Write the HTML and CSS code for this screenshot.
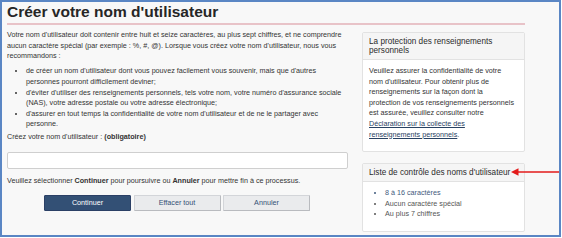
FILE: index.html
```html
<!DOCTYPE html>
<html lang="fr">
<head>
    <meta charset="UTF-8">
    <meta name="viewport" content="width=device-width, initial-scale=1.0">
    <title>Créer votre nom d'utilisateur</title>
    <link rel="stylesheet" href="styles.css">
</head>
<body>
    <div class="frame">
        <div class="container">
            <h1 class="title">Créer votre nom d'utilisateur</h1>
            <div class="row">
                <!-- colonne principale -->
                <div class="main">
                    <p>Votre nom d'utilisateur doit contenir entre huit et seize caractères, au plus sept chiffres, et ne comprendre aucun caractère spécial (par exemple : %, #, @). Lorsque vous créez votre nom d'utilisateur, nous vous recommandons :</p>
                    <ul class="tips">
                        <li>de créer un nom d'utilisateur dont vous pouvez facilement vous souvenir, mais que d'autres personnes pourront difficilement deviner;</li>
                        <li>d'éviter d'utiliser des renseignements personnels, tels votre nom, votre numéro d'assurance sociale (NAS), votre adresse postale ou votre adresse électronique;</li>
                        <li>d'assurer en tout temps la confidentialité de votre nom d'utilisateur et de ne le partager avec personne.</li>
                    </ul>
                    <label class="field-label" for="username">Créez votre nom d'utilisateur : <strong>(obligatoire)</strong></label>
                    <input class="field" type="text" id="username">
                    <p class="hint">Veuillez sélectionner <strong>Continuer</strong> pour poursuivre ou <strong>Annuler</strong> pour mettre fin à ce processus.</p>
                    <div class="actions">
                        <button class="btn btn-primary">Continuer</button>
                        <button class="btn">Effacer tout</button>
                        <button class="btn">Annuler</button>
                    </div>
                </div>
                <!-- colonne de droite -->
                <div class="side">
                    <div class="panel">
                        <div class="panel-heading">La protection des renseignements personnels</div>
                        <div class="panel-body">
                            <p>Veuillez assurer la confidentialité de votre nom d'utilisateur. Pour obtenir plus de renseignements sur la façon dont la protection de vos renseignements personnels est assurée, veuillez consulter notre <a href="#">Déclaration sur la collecte des renseignements personnels</a>.</p>
                        </div>
                    </div>
                    <div class="panel">
                        <div class="panel-heading">Liste de contrôle des noms d'utilisateur</div>
                        <div class="panel-body">
                            <ul class="checklist">
                                <li class="ok">8 à 16 caractères</li>
                                <li>Aucun caractère spécial</li>
                                <li>Au plus 7 chiffres</li>
                            </ul>
                        </div>
                    </div>
                </div>
            </div>
        </div>
        <!-- flèche d'annotation -->
        <svg class="arrow" width="52" height="12" viewBox="0 0 52 12">
            <line x1="6" y1="6" x2="48" y2="6" stroke="#e31b1b" stroke-width="1.6"/>
            <polygon points="0,6 7.5,2.3 7.5,9.7" fill="#e31b1b"/>
        </svg>
    </div>
</body>
</html>
```

FILE: styles.css
```css
*{
    margin: 0;
    padding: 0;
    box-sizing: border-box;
}

body{
    background: #fff;
    font-family: "Liberation Sans", Arial, sans-serif;
    color: #333;
}

.frame{
    position: relative;
    width: 561px;
    height: 237px;
    border: 2px solid #5a86c4;
    background: #f8f8f8;
}

.container{
    width: 518px;
    margin-left: 5px;
}

.title{
    font-size: 15.5px;
    line-height: 18px;
    font-weight: bold;
    color: #262626;
    padding-top: 1px;
    padding-bottom: 2px;
    border-bottom: 2px solid #e8c3c8;
}

.row{
    display: flex;
    gap: 15px;
    margin-top: 5px;
}

.main{
    width: 340px;
    font-size: 7.2px;
    line-height: 10.6px;
}

.tips{
    margin-top: 4.6px;
    padding-left: 19px;
}

.field-label{
    display: block;
    margin-top: 2px;
}

.field{
    display: block;
    width: 341px;
    height: 17px;
    margin-top: 9.7px;
    border: 1px solid #cfcfcf;
    border-radius: 2px;
    background: #fff;
    outline: none;
}

.hint{
    margin-top: 6.7px;
}

.actions{
    display: flex;
    justify-content: center;
    gap: 2.5px;
    margin-top: 8px;
}

.btn{
    width: 87px;
    height: 16px;
    font: 7.2px "Liberation Sans", Arial, sans-serif;
    color: #335075;
    background: #eaebed;
    border: 1px solid #d3d5d9;
    border-right-color: #b9bbbf;
    border-bottom-color: #b9bbbf;
    border-radius: 1px;
}

.btn-primary{
    color: #fff;
    background: #335075;
    border-color: #2b4066;
}

.side{
    width: 163px;
    margin-top: 2px;
    font-size: 7.2px;
    line-height: 10.6px;
}

.panel{
    background: #fff;
    border: 1px solid #e2e2e2;
    border-radius: 2px;
    margin-bottom: 11px;
}

.panel-heading{
    font-size: 8.2px;
    line-height: 9px;
    padding: 4px 6px;
    background: #f5f5f5;
    border-bottom: 1px solid #e2e2e2;
    color: #2b2b2b;
}

.panel-body{
    padding: 6px 8.5px 6px 6px;
}

.panel-body p,
.panel-body ul{
    margin-bottom: 4.8px;
}

.panel-body a{
    color: #284162;
}

.checklist{
    padding-left: 16px;
    color: #555;
}

.checklist .ok{
    color: #3f5a7d;
}

.arrow{
    position: absolute;
    left: 509px;
    top: 164.3px;
}
```
